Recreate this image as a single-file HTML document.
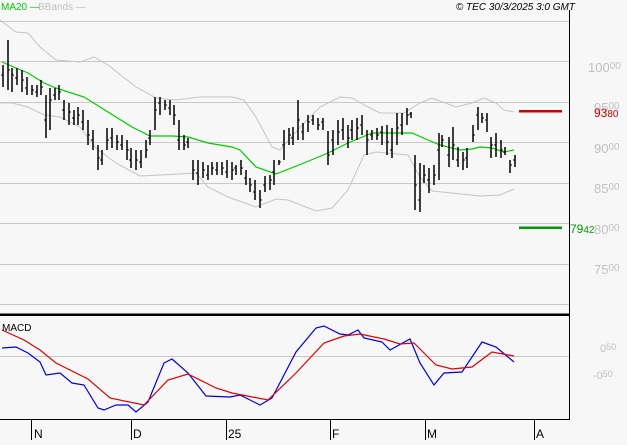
<!DOCTYPE html>
<html><head><meta charset="utf-8"><style>
html,body{margin:0;padding:0;background:#f7f7f7;}
body{width:627px;height:440px;overflow:hidden;font-family:"Liberation Sans",sans-serif;}
svg text{font-family:"Liberation Sans",sans-serif;}
</style></head><body>
<svg width="627" height="440" viewBox="0 0 627 440" xmlns="http://www.w3.org/2000/svg">
<rect width="627" height="440" fill="#f7f7f7"/>
<g stroke="#c8c8c8" stroke-width="1" fill="none">
<path d="M0 21.5H569M0 61.5H569M0 102.5H569M0 142.5H569M0 183.5H569M0 223.5H569M0 264.5H569M0 304.5H569M0 356.5H569"/>
</g>
<!-- bands -->
<polyline fill="none" stroke="#c4c4c4" stroke-width="1" points="0,20 16,32 28,33 40,47 56,60 80,62 94,57 108,65 136,87 156,98 176,100 200,97 232,97 244,100 256,117 272,147 280,150 304,123 320,107 340,97 352,98 368,107 380,113 404,113 420,103 432,98 456,107 472,103 484,98 496,103 504,110 514,112"/>
<polyline fill="none" stroke="#c4c4c4" stroke-width="1" points="0,103 12,103 28,107 44,115 60,117 80,127 96,148 116,163 140,176 160,175 196,173 208,187 228,197 256,207 276,199 288,200 316,211 332,208 348,190 364,155 376,152 408,155 420,177 432,191 452,193 480,196 500,195 514,189"/>
<polyline fill="none" stroke="#00cc00" stroke-width="1.2" points="2,62 16,68 28,73 44,83 56,88 84,97 100,107 116,117 132,127 150,136 172,136 188,137 208,143 232,147 240,150 256,167 276,174 304,163 328,153 348,143 372,133 412,133 428,140 440,145 460,150 472,149 480,147 492,148 504,152 514,150"/>
<!-- bars -->
<path fill="none" stroke="#000" stroke-width="1.5" d="
M3 65V87M8 40V90M12 68V92M17 68V85M22 70V92M27 77V95M32 85V95M37 85V97M41 80V95M46 95V138M50 88V130M55 88V100M59 85V100M64 100V120M69 103V125M74 110V125M78 107V125M83 110V130M88 120V145M93 130V150M98 145V170M102 150V165M107 128V150M112 128V148M117 135V150M122 135V150M127 140V160M131 148V168M136 150V170M141 150V168M146 140V158M150 130V145M155 97V130M160 97V115M165 100V110M170 100V115M174 105V125M179 120V150M184 135V150M188 138V148M193 160V180M198 160V185M203 162V178M208 165V180M212 162V175M217 162V175M222 162V175M227 160V178M232 162V180M236 165V175M241 160V175M246 170V185M250 178V192M255 180V200M260 190V208M265 176V192M270 175V190M274 160V185M279 160V165M284 130V160M289 128V145M293 127V145M298 100V140M303 123V140M308 115V132M313 115V125M318 118V130M323 118V130M328 131V165M333 130V155M338 120V145M343 118V140M348 125V148M352 120V140M357 118V140M362 115V135M367 130V155M372 130V140M377 128V140M382 126V145M387 125V155M392 128V158M397 113V145M402 113V135M407 108V125M411 112V118
M415 155V210M420 163V212M424 165V183M429 168V193M434 165V185M439 133V180M442 135V147M449 137V167M453 127V160M458 147V167M463 152V170M467 148V168M473 125V142M478 107V130M482 113V123M487 113V132M491 137V158M496 133V157M501 140V158M505 147V155M510 160V173M515 155V167"/>
<path fill="none" stroke="#000" stroke-width="1" d="
M1 75H3M8 70H10M12 75H14M15 78H17M22 80H24M25 88H27M32 90H34M35 92H37M41 87H43M44 120H46M50 100H52M53 95H55M59 92H61M62 110H64M69 112H71M72 118H74M78 115H80M81 122H83M88 135H90M91 140H93M98 158H100M100 160H102M107 140H109M110 138H112M117 142H119M120 145H122M127 150H129M129 160H131M136 160H138M139 162H141M146 150H148M148 138H150M155 110H157M158 103H160M165 105H167M168 108H170M174 115H176M177 140H179M184 145H186M186 142H188M193 170H195M196 173H198M203 170H205M206 175H208M212 168H214M215 170H217M222 168H224M225 172H227M232 170H234M234 168H236M241 168H243M244 178H246M250 185H252M253 192H255M260 200H262M263 185H265M270 180H272M272 172H274M279 162H281M282 145H284M289 135H291M291 138H293M298 120H300M301 132H303M308 122H310M311 120H313M318 125H320M321 122H323M328 155H330M331 140H333M338 132H340M341 130H343M348 138H350M350 130H352M357 128H359M360 125H362M367 140H369M370 135H372M377 135H379M380 132H382M387 142H389M390 150H392M397 128H399M400 125H402M407 115H409M409 114H411
M415 185H417M418 200H420M424 175H426M427 180H429M434 175H436M437 150H439M442 140H444M447 155H449M453 145H455M456 160H458M463 160H465M465 158H467M473 135H475M476 115H478M482 118H484M485 120H487M491 145H493M494 145H496M501 150H503M503 152H505M510 165H512M513 160H515"/>
<!-- targets -->
<rect x="519" y="110" width="43" height="2.5" fill="#cc0000"/>
<rect x="519" y="226.5" width="43" height="2.5" fill="#009900"/>
<!-- MACD -->
<polyline fill="none" stroke="#0000dd" stroke-width="1.2" points="2,348 16,347 28,353 40,362 46,375 60,373 72,383 84,385 98,408 104,410 116,405 128,405 136,412 148,402 164,363 172,359 188,373 206,396 230,397 240,395 260,405 272,398 296,352 316,328 324,326 340,334 348,335 358,330 364,338 382,342 390,350 410,339 420,363 434,385 444,373 462,372 482,342 496,347 514,362"/>
<polyline fill="none" stroke="#dd0000" stroke-width="1.2" points="2,330 24,340 40,350 56,363 88,379 110,398 144,405 168,380 188,374 216,388 232,393 268,400 296,373 324,343 344,336 360,334 384,339 400,344 414,343 436,365 452,369 472,367 492,352 514,356"/>
<!-- axes -->
<rect x="0" y="313.5" width="569" height="2.5" fill="#000"/>
<path fill="none" stroke="#000" stroke-width="1" d="M569.5 10V420M0 419.5H570M31.5 420V440M131.5 420V440M226.5 420V440M330.5 420V440M425.5 420V440M534.5 420V440"/>
<g font-size="12" fill="#000">
<text x="34" y="438">N</text><text x="133" y="438">D</text><text x="228" y="438">25</text><text x="332" y="438">F</text><text x="427" y="438">M</text><text x="536" y="438">A</text>
</g>
<text x="2" y="331" font-size="10" fill="#000">MACD</text>
<text x="1" y="10" font-size="10" fill="#00cc00">MA20 —</text>
<text x="38" y="10" font-size="10" fill="#c0c0c0">BBands —</text>
<text x="575" y="10" font-size="10" font-style="italic" fill="#000" text-anchor="end">© TEC 30/3/2025 3:0 GMT</text>
<g fill="#c0c0c0" font-size="13">
<text x="588" y="72">100<tspan font-size="10" dy="-3">00</tspan></text>
<text x="594" y="112">95<tspan font-size="10" dy="-3">00</tspan></text>
<text x="594" y="153">90<tspan font-size="10" dy="-3">00</tspan></text>
<text x="594" y="193">85<tspan font-size="10" dy="-3">00</tspan></text>
<text x="594" y="234">80<tspan font-size="10" dy="-3">00</tspan></text>
<text x="594" y="274">75<tspan font-size="10" dy="-3">00</tspan></text>
<text x="600" y="352" font-size="11">0<tspan font-size="9" dy="-2">50</tspan></text>
<text x="593" y="379" font-size="11">-0<tspan font-size="9" dy="-2">50</tspan></text>
</g>
<text x="594" y="117" font-size="12" fill="#cc0000">93<tspan font-size="10">80</tspan></text>
<text x="570" y="233" font-size="12" fill="#009900">79<tspan font-size="10">42</tspan></text>
</svg>
</body></html>
